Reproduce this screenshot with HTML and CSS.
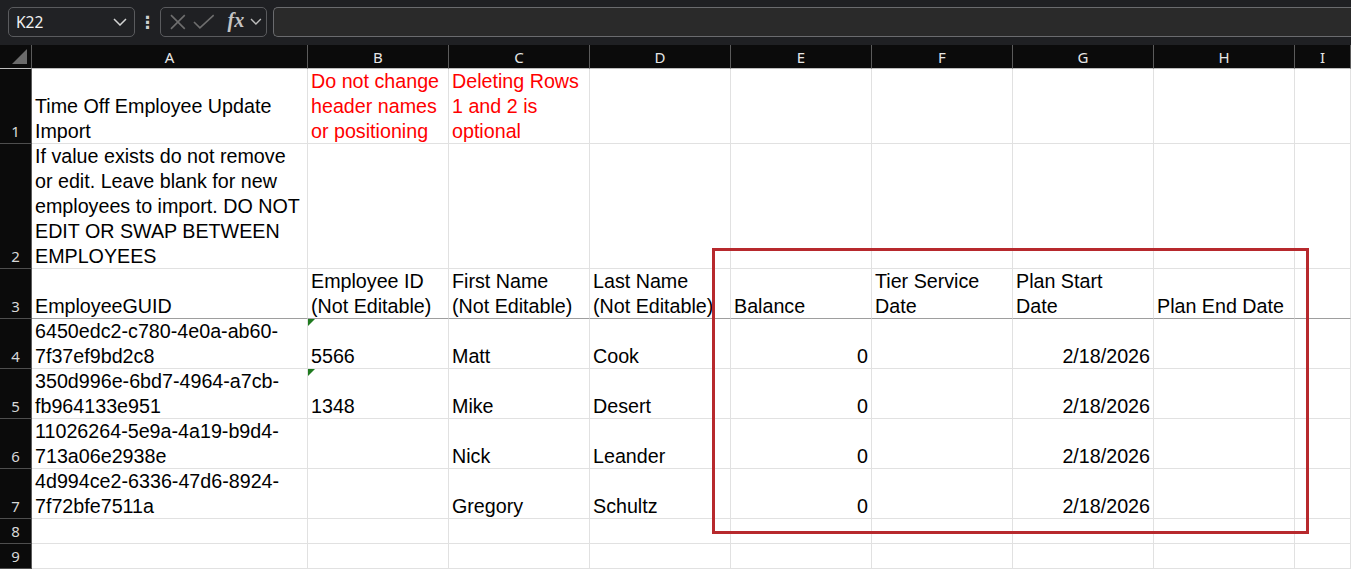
FILE: index.html
```html
<!DOCTYPE html>
<html lang="en">
<head>
  <meta charset="UTF-8" />
  <title>Time Off Employee Update Import</title>
  <link rel="stylesheet" href="styles.css">
</head>
<body>
  <!-- Barra de formula -->
  <div class="toolbar">
    <div class="namebox">
      <span>K22</span>
      <svg width="14" height="8" viewBox="0 0 14 8"><polyline points="1,1 7,7 13,1" fill="none" stroke="#d4d4d4" stroke-width="1.5"/></svg>
    </div>
    <div class="dots">⋮</div>
    <div class="fxbox">
      <svg width="18" height="18" viewBox="0 0 18 18"><path d="M2 2 L16 16 M16 2 L2 16" stroke="#6e6e6e" stroke-width="1.6"/></svg>
      <svg width="22" height="18" viewBox="0 0 22 18"><polyline points="1,9 7,15 21,2" fill="none" stroke="#6e6e6e" stroke-width="1.6"/></svg>
      <span class="fx">fx</span>
      <svg width="12" height="8" viewBox="0 0 12 8"><polyline points="1,1 6,6 11,1" fill="none" stroke="#bdbdbd" stroke-width="1.4"/></svg>
    </div>
    <div class="formula"></div>
  </div>

  <!-- Planilha -->
  <div class="sheet">
    <div class="corner"><span class="tri"></span></div>
    <div class="colhead">A</div>
    <div class="colhead">B</div>
    <div class="colhead">C</div>
    <div class="colhead">D</div>
    <div class="colhead">E</div>
    <div class="colhead">F</div>
    <div class="colhead">G</div>
    <div class="colhead">H</div>
    <div class="colhead">I</div>

    <div class="rowhead">1</div>
    <div class="cell"><span>Time Off Employee Update<br>Import</span></div>
    <div class="cell red"><span>Do not change<br>header names<br>or positioning</span></div>
    <div class="cell red"><span>Deleting Rows<br>1 and 2 is<br>optional</span></div>
    <div class="cell"></div><div class="cell"></div><div class="cell"></div><div class="cell"></div><div class="cell"></div><div class="cell"></div>

    <div class="rowhead">2</div>
    <div class="cell"><span>If value exists do not remove<br>or edit. Leave blank for new<br>employees to import. DO NOT<br>EDIT OR SWAP BETWEEN<br>EMPLOYEES</span></div>
    <div class="cell"></div><div class="cell"></div><div class="cell"></div><div class="cell"></div><div class="cell"></div><div class="cell"></div><div class="cell"></div><div class="cell"></div>

    <div class="rowhead">3</div>
    <div class="cell frz"><span>EmployeeGUID</span></div>
    <div class="cell frz"><span>Employee ID<br>(Not Editable)</span></div>
    <div class="cell frz"><span>First Name<br>(Not Editable)</span></div>
    <div class="cell frz"><span>Last Name<br>(Not Editable)</span></div>
    <div class="cell frz"><span>Balance</span></div>
    <div class="cell frz"><span>Tier Service<br>Date</span></div>
    <div class="cell frz"><span>Plan Start<br>Date</span></div>
    <div class="cell frz"><span>Plan End Date</span></div>
    <div class="cell frz"></div>

    <div class="rowhead">4</div>
    <div class="cell"><span>6450edc2-c780-4e0a-ab60-<br>7f37ef9bd2c8</span></div>
    <div class="cell flag"><span>5566</span></div>
    <div class="cell"><span>Matt</span></div>
    <div class="cell"><span>Cook</span></div>
    <div class="cell num"><span>0</span></div>
    <div class="cell"></div>
    <div class="cell num"><span>2/18/2026</span></div>
    <div class="cell"></div><div class="cell"></div>

    <div class="rowhead">5</div>
    <div class="cell"><span>350d996e-6bd7-4964-a7cb-<br>fb964133e951</span></div>
    <div class="cell flag"><span>1348</span></div>
    <div class="cell"><span>Mike</span></div>
    <div class="cell"><span>Desert</span></div>
    <div class="cell num"><span>0</span></div>
    <div class="cell"></div>
    <div class="cell num"><span>2/18/2026</span></div>
    <div class="cell"></div><div class="cell"></div>

    <div class="rowhead">6</div>
    <div class="cell"><span>11026264-5e9a-4a19-b9d4-<br>713a06e2938e</span></div>
    <div class="cell"></div>
    <div class="cell"><span>Nick</span></div>
    <div class="cell"><span>Leander</span></div>
    <div class="cell num"><span>0</span></div>
    <div class="cell"></div>
    <div class="cell num"><span>2/18/2026</span></div>
    <div class="cell"></div><div class="cell"></div>

    <div class="rowhead">7</div>
    <div class="cell"><span>4d994ce2-6336-47d6-8924-<br>7f72bfe7511a</span></div>
    <div class="cell"></div>
    <div class="cell"><span>Gregory</span></div>
    <div class="cell"><span>Schultz</span></div>
    <div class="cell num"><span>0</span></div>
    <div class="cell"></div>
    <div class="cell num"><span>2/18/2026</span></div>
    <div class="cell"></div><div class="cell"></div>

    <div class="rowhead">8</div>
    <div class="cell"></div><div class="cell"></div><div class="cell"></div><div class="cell"></div><div class="cell"></div><div class="cell"></div><div class="cell"></div><div class="cell"></div><div class="cell"></div>

    <div class="rowhead">9</div>
    <div class="cell"></div><div class="cell"></div><div class="cell"></div><div class="cell"></div><div class="cell"></div><div class="cell"></div><div class="cell"></div><div class="cell"></div><div class="cell"></div>

    <!-- destaque vermelho -->
    <div class="highlight"></div>
  </div>
</body>
</html>
```

FILE: styles.css
```css
body {
  margin: 0;
  background-color: #ffffff;
  font-family: "Liberation Sans", Arial, sans-serif;
  overflow: hidden;
}

/* Barra de formula */
.toolbar {
  height: 45px;
  box-sizing: border-box;
  background-color: #1f2023;
  display: flex;
  align-items: flex-start;
  padding: 7px 0 0 8px;
}
.namebox {
  width: 127px;
  height: 30px;
  box-sizing: border-box;
  border: 1px solid #5a5b5e;
  border-radius: 5px;
  background-color: #212225;
  display: flex;
  align-items: center;
  justify-content: space-between;
  padding: 0 7px 0 7px;
  color: #f2f2f2;
  font-family: "Noto Sans", sans-serif;
  font-size: 15.5px;
}
.dots {
  width: 25px;
  height: 30px;
  display: flex;
  align-items: center;
  justify-content: center;
  color: #cfcfcf;
  font-size: 17px;
  font-weight: bold;
  font-family: "DejaVu Sans", sans-serif;
}
.fxbox {
  width: 107px;
  height: 30px;
  box-sizing: border-box;
  border: 1px solid #5a5b5e;
  border-radius: 5px;
  display: flex;
  align-items: center;
  padding: 0 4px 0 8px;
  gap: 6px;
}
.fx {
  font-family: "Liberation Serif", serif;
  font-style: italic;
  font-weight: bold;
  font-size: 20px;
  color: #c4c4c4;
  margin-left: 7px;
  margin-top: -3px;
}
.formula {
  flex: 1;
  height: 30px;
  box-sizing: border-box;
  margin-left: 6px;
  border: 1px solid #6a6b6e;
  border-right: none;
  border-radius: 5px 0 0 5px;
  background-color: #2a2a2a;
}

/* Planilha */
.sheet {
  position: relative;
  display: grid;
  grid-template-columns: 32px 276px repeat(7, 141px) 1fr;
  grid-template-rows: 24px 75px 125px 50px 50px 50px 50px 50px 25px 25px;
}
.sheet > div {
  box-sizing: border-box;
}
.corner {
  background-color: #0b0b0b;
  border-right: 1px solid #5b5b5b;
  border-bottom: 1px solid #bdbdbd;
  position: relative;
}
.tri {
  position: absolute;
  right: 4px;
  bottom: 4px;
  width: 0;
  height: 0;
  border-left: 15px solid transparent;
  border-bottom: 15px solid #6b6b6b;
}
.colhead {
  background-color: #0b0b0b;
  color: #e6e6e6;
  font-family: "Noto Sans", sans-serif;
  font-size: 15px;
  border-right: 1px solid #5b5b5b;
  border-bottom: 1px solid #bdbdbd;
  display: flex;
  align-items: center;
  justify-content: center;
}
.rowhead {
  background-color: #0b0b0b;
  color: #d8d8d8;
  font-family: "Noto Sans", sans-serif;
  font-size: 15px;
  border-bottom: 1px solid #4e4e4e;
  border-right: 1px solid #5b5b5b;
  display: flex;
  align-items: flex-end;
  justify-content: center;
  line-height: 23px;
}
.cell {
  border-right: 1px solid #e1e1e1;
  border-bottom: 1px solid #e1e1e1;
  font-size: 19.7px;
  line-height: 25px;
  color: #000000;
  padding: 0 3px 0 3px;
  white-space: nowrap;
  display: flex;
  align-items: flex-end;
  position: relative;
}
.cell span {
  position: relative;
  top: 1px;
}
.cell.red {
  color: #ff0000;
}
.cell.num {
  justify-content: flex-end;
}
.cell.frz {
  border-bottom-color: #9e9e9e;
}
.cell.flag::before {
  content: "";
  position: absolute;
  left: 0;
  top: 0;
  border-top: 7px solid #1f7a1f;
  border-right: 7px solid transparent;
}
.highlight {
  position: absolute;
  left: 712px;
  top: 203px;
  width: 597px;
  height: 286px;
  border: 3.5px solid #b7292d;
  pointer-events: none;
}
```
